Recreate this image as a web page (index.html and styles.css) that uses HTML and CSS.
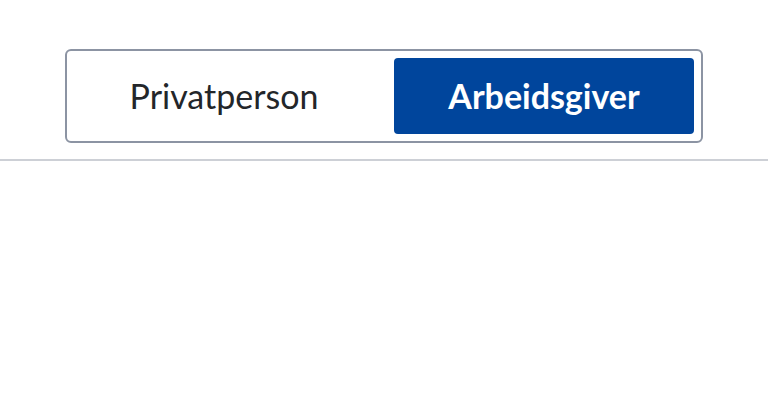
FILE: index.html
```html
<!DOCTYPE html>
<html lang="no">
<head>
<meta charset="utf-8">
<title>Velg</title>
<link rel="stylesheet" href="styles.css">
</head>
<body>
<header class="header">
  <div class="toggle" role="radiogroup">
    <button class="toggle-btn">Privatperson</button>
    <button class="toggle-btn active">Arbeidsgiver</button>
  </div>
</header>
<hr class="divider">
</body>
</html>
```
FILE: styles.css
```css
html, body {
  margin: 0;
  padding: 0;
  background: #ffffff;
}
body {
  font-family: "Lato", "Noto Sans", sans-serif;
  color: #23262a;
}
.header {
  display: flex;
  justify-content: center;
  padding-top: 49px;
  padding-bottom: 16px;
}
.toggle {
  display: grid;
  grid-template-columns: 300px 300px;
  gap: 20px;
  padding: 7px;
  border: 2px solid #8c94a3;
  border-radius: 6px;
  box-sizing: content-box;
}
.toggle-btn {
  height: 76px;
  border: 0;
  border-radius: 4px;
  background: transparent;
  font-family: inherit;
  font-size: 34px;
  font-weight: 400;
  color: #23262a;
  padding: 0 0 2px;
}
.toggle-btn.active {
  background: #00459c;
  color: #ffffff;
  font-weight: 700;
}
.divider {
  margin: 0;
  border: 0;
  height: 2px;
  background: #cdd0d6;
}
```
